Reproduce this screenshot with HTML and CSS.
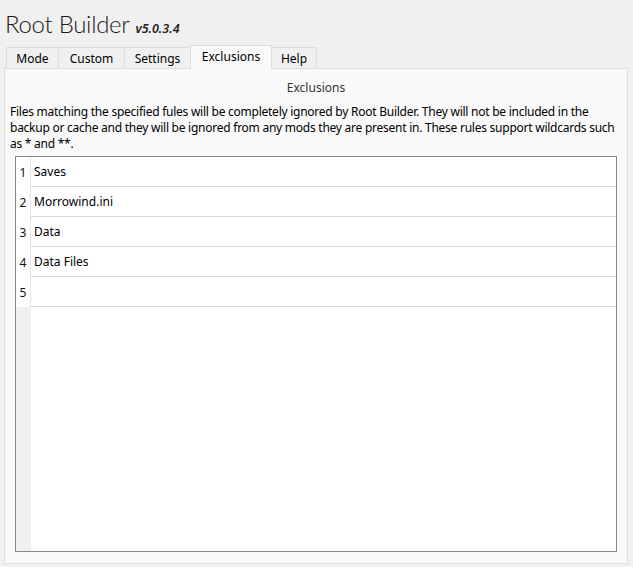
FILE: index.html
```html
<!DOCTYPE html>
<html>
<head>
<meta charset="utf-8">
<link rel="stylesheet" href="styles.css">
</head>
<body>
<div class="header">
  <span class="title">Root Builder</span>
  <span class="version">v5.0.3.4</span>
</div>
<div class="tabs">
  <div class="tab tab-mode">Mode</div>
  <div class="tab tab-custom">Custom</div>
  <div class="tab tab-settings">Settings</div>
  <div class="tab tab-active">Exclusions</div>
  <div class="tab tab-help">Help</div>
</div>
<div class="panel">
  <div class="panel-title">Exclusions</div>
  <p class="desc">Files matching the specified fules will be completely ignored by Root Builder. They will not be included in the backup or cache and they will be ignored from any mods they are present in. These rules support wildcards such as * and **.</p>
  <div class="editor">
    <div class="row"><div class="num">1</div><div class="cell">Saves</div></div>
    <div class="row"><div class="num">2</div><div class="cell">Morrowind.ini</div></div>
    <div class="row"><div class="num">3</div><div class="cell">Data</div></div>
    <div class="row"><div class="num">4</div><div class="cell">Data Files</div></div>
    <div class="row"><div class="num">5</div><div class="cell"></div></div>
    <div class="filler"><div class="gutter"></div><div class="blank"></div></div>
  </div>
</div>
</body>
</html>
```
FILE: styles.css
```css
html, body {
  margin: 0;
  padding: 0;
}
body {
  background: #f0f0f0;
  font-family: "Noto Sans", "Open Sans", sans-serif;
  color: #000;
  width: 633px;
  height: 567px;
  overflow: hidden;
}
.header {
  height: 45px;
  padding-left: 5px;
  display: flex;
  align-items: baseline;
  box-sizing: border-box;
  padding-top: 9px;
}
.title {
  font-family: "Lato", "Noto Sans", sans-serif;
  font-weight: 300;
  font-size: 24px;
  letter-spacing: -0.3px;
  color: #1a1a1a;
}
.version {
  font-size: 12.5px;
  font-style: italic;
  font-weight: 600;
  margin-left: 6px;
  color: #222;
}
.tabs {
  display: flex;
  align-items: flex-end;
  margin-left: 6px;
  height: 23px;
  position: relative;
  z-index: 1;
}
.tab {
  height: 21px;
  box-sizing: border-box;
  border: 1px solid #dcdcdc;
  border-bottom: none;
  border-left: none;
  background: #f0f0f0;
  font-size: 12px;
  display: flex;
  align-items: center;
  justify-content: center;
  padding-top: 1px;
}
.tab-mode { width: 53px; border-left: 1px solid #dcdcdc; }
.tab-custom { width: 66px; }
.tab-settings { width: 66px; }
.tab-active {
  width: 82px;
  height: 24px;
  background: #f9f9f9;
  border-left: 1px solid #dcdcdc;
  margin-left: -1px;
  margin-bottom: -1px;
  padding-bottom: 3px;
}
.tab-help { width: 45px; }
.panel {
  margin: 0 5px 0 4px;
  height: 496px;
  box-sizing: border-box;
  border: 1px solid #dcdcdc;
  background: #f9f9f9;
  padding: 0 5px;
  display: flex;
  flex-direction: column;
}
.panel-title {
  text-align: center;
  font-size: 12px;
  color: #333;
  margin-top: 11px;
  line-height: 16px;
}
.desc {
  margin: 8px 0 0 0;
  font-size: 12px;
  line-height: 16px;
  letter-spacing: -0.25px;
}
.editor {
  margin: 4px 5px 0 5px;
  height: 396px;
  box-sizing: border-box;
  border: 1px solid #828790;
  background: #fff;
  display: flex;
  flex-direction: column;
}
.row {
  display: flex;
  height: 30px;
}
.num {
  width: 14px;
  font-size: 12px;
  display: flex;
  align-items: center;
  justify-content: center;
  color: #111;
}
.cell {
  flex: 1;
  border-left: 1px solid #e6e6e6;
  border-bottom: 1px solid #d9d9d9;
  font-size: 12px;
  display: flex;
  align-items: center;
  padding-left: 3px;
}
.filler {
  flex: 1;
  display: flex;
}
.gutter {
  width: 14px;
  background: #f0f0f0;
}
.blank {
  flex: 1;
  border-left: 1px solid #f0f0f0;
}
```
